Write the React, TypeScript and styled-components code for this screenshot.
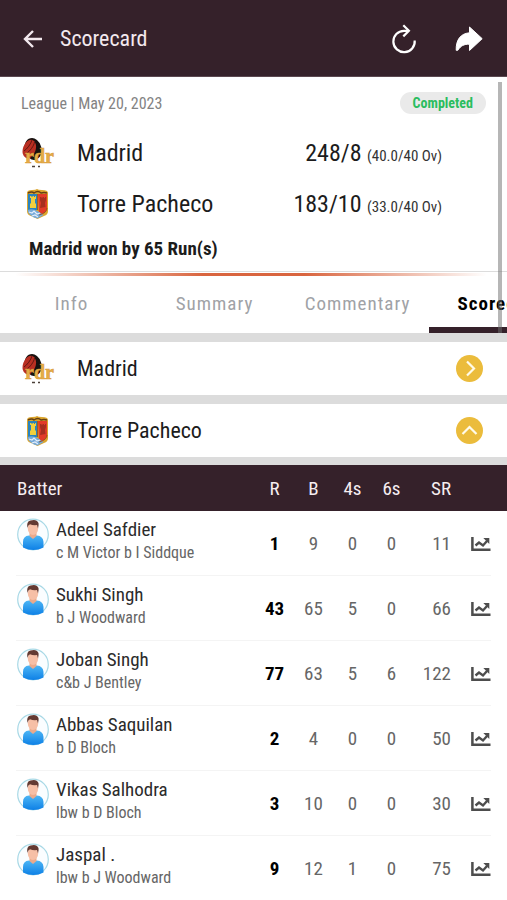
import React from 'react';
import styled, { createGlobalStyle } from 'styled-components';

const plum = '#35212a';

const GlobalStyle = createGlobalStyle`
  * { box-sizing: border-box; }
  body {
    margin: 0;
    background: #fff;
    color: #1c1c1c;
    font-family: "Roboto Condensed", "Liberation Sans Narrow", Roboto, sans-serif;
    overflow: hidden;
  }
  button { font: inherit; color: inherit; border: 0; padding: 0; background: none; cursor: pointer; }
  svg { display: block; }
  h1, h2, p { margin: 0; font-weight: 400; }
`;

const AppBar = styled.header`
  display: flex;
  align-items: center;
  height: 77px;
  padding: 2px 24px 0 22px;
  background: ${plum};
  border-bottom: 1px solid #5b4850;
  color: #fff;
`;

const Title = styled.h1`
  flex: 1;
  padding-left: 16px;
  font-size: 22px;
  line-height: 28px;
  color: #f3e9ee;
`;

const Actions = styled.div`
  display: flex;
  align-items: center;
  gap: 38px;
`;

const MatchArea = styled.div`
  position: relative;
`;

const ScrollThumb = styled.div`
  position: absolute;
  top: 5px;
  right: 5px;
  bottom: 0;
  width: 4px;
  background: rgba(110, 110, 110, 0.5);
`;

const MatchCard = styled.section`
  padding: 14px 21px 2px;
`;

const MetaRow = styled.div`
  display: flex;
  align-items: center;
  justify-content: space-between;
  height: 24px;
  margin-bottom: 12px;
  color: #838383;
  font-size: 16px;
`;

const Status = styled.span`
  padding: 0 13px;
  border-radius: 11px;
  background: #eaeaea;
  color: #2bbd60;
  font-size: 14px;
  font-weight: 700;
  line-height: 22px;
`;

const ScoreRow = styled.div`
  display: flex;
  align-items: center;
  height: 51px;
  padding-right: 44px;
`;

const Crest = styled.span`
  flex: none;
  width: 56px;
`;

const TeamName = styled.h2<{ $size: number }>`
  flex: 1;
  font-size: ${p => p.$size}px;
  line-height: 28px;
`;

const Score = styled.p`
  font-size: 24px;
  line-height: 28px;
`;

const Overs = styled.span`
  font-size: 15px;
  line-height: 1;
  color: #333;
`;

const Result = styled.p`
  padding: 0 8px;
  font-size: 19px;
  font-weight: 700;
  line-height: 40px;
`;

const Glow = styled.div`
  height: 5px;
  border-top: 1px solid #dcdcdc;
  padding-top: 1px;
  &::after {
    content: "";
    display: block;
    height: 3px;
    background: linear-gradient(90deg, transparent 3%, #d9653f 40%, #d9653f 60%, transparent 96%);
  }
`;

const TabBar = styled.nav`
  display: flex;
  overflow: hidden;
  height: 57px;
`;

const Tab = styled.button<{ $active?: boolean }>`
  && {
    flex: none;
    width: 143px;
    padding-top: 3px;
    border-bottom: 6px solid ${p => (p.$active ? plum : 'transparent')};
    color: ${p => (p.$active ? '#000' : '#a0a2a6')};
    font-size: 19px;
    font-weight: ${p => (p.$active ? 700 : 400)};
    letter-spacing: 1px;
  }
`;

const Innings = styled.button`
  && {
    display: flex;
    align-items: center;
    width: 100%;
    height: 62px;
    padding: 0 24px 0 21px;
    border-top: 9px solid #dcdcdc;
    text-align: left;
  }
`;

const TableWrap = styled.div`
  border-top: 8px solid #dcdcdc;
`;

const Table = styled.table`
  width: 100%;
  border-collapse: collapse;
  table-layout: fixed;
`;

const HeadRow = styled.tr`
  height: 46px;
  background: ${plum};
  color: #f6eef1;
  font-size: 19px;
`;

const HeadCell = styled.th<{ $kind?: 'name' | 'rate' | 'chart' }>`
  width: ${p => (p.$kind === 'name' ? 'auto' : p.$kind === 'chart' ? '56px' : p.$kind === 'rate' ? '40px' : '39px')};
  padding: 0 0 0 ${p => (p.$kind === 'name' ? '17px' : '0')};
  text-align: ${p => (p.$kind === 'name' ? 'left' : p.$kind === 'rate' ? 'right' : 'center')};
  font-weight: 400;
`;

const BatterRow = styled.tr`
  height: 65px;
  background: linear-gradient(#f4f4f4, #f4f4f4) 16px 100% / calc(100% - 32px) 1px no-repeat;
`;

const Cell = styled.td<{ $strong?: boolean; $right?: boolean }>`
  padding: 0;
  text-align: ${p => (p.$right ? 'right' : 'center')};
  color: ${p => (p.$strong ? '#000' : '#666')};
  font-size: 19px;
  font-weight: ${p => (p.$strong ? 700 : 400)};
`;

const PlayerCell = styled.th`
  padding: 7px 0 0 17px;
  text-align: left;
  vertical-align: top;
  font-weight: 400;
`;

const Player = styled.div`
  display: flex;
  gap: 7px;
`;

const PlayerName = styled.p`
  font-size: 19px;
  line-height: 24px;
  color: #2b2b2b;
`;

const Dismissal = styled.p`
  font-size: 16px;
  line-height: 22px;
  color: #666;
`;

const ChartButton = styled.button`
  && { display: block; margin-left: 20px; }
`;

const BackIcon = () => (
  <svg width="22" height="20" viewBox="0 0 22 20" fill="none" stroke="#f3e9ee" strokeWidth="2.4">
    <path d="M20 10H3M11 2L3 10l8 8" />
  </svg>
);

const RefreshIcon = () => (
  <svg width="26" height="30" viewBox="0 0 26 30" fill="none" stroke="#fff" strokeWidth="2.2">
    <path d="M23.700 16.500A10.700 10.700 0 1 1 13 6.800h4.500" />
    <path d="M12.300 1.200L17.900 6.800l-5.600 5.600" />
  </svg>
);

const ShareIcon = () => (
  <svg width="28" height="26" viewBox="0 0 28 26" fill="#fff" stroke="#fff" strokeWidth="1" strokeLinejoin="round">
    <path d="M14.500 1L27.200 12.700 14.500 24.500V18.200C9 18 5.500 20 2.800 24.300H1.200C.8 14 5.500 7.500 14.500 6.800z" />
  </svg>
);

const MadridCrest = () => (
  <svg width="34" height="32" viewBox="0 0 34 32">
    <ellipse cx="12" cy="12" rx="8.500" ry="11" fill="#17110f" transform="rotate(-14 12 12)" />
    <ellipse cx="8.300" cy="12" rx="6.300" ry="9.600" fill="#b92f22" transform="rotate(20 8.300 12)" />
    <path d="M3 14C6 12 10 7 11 3M5 17C9 14 13 9 13.500 5" fill="none" stroke="#5e1712" strokeWidth="1" />
    <text x="4" y="26" fontFamily="Liberation Serif, serif" fontSize="20" fontWeight="700" fill="#e5ad48" stroke="#d99b38" strokeWidth="0.6">rdr</text>
    <path d="M11 29.500h3M17 29.500h2" stroke="#4b4039" strokeWidth="1.600" />
  </svg>
);

const PachecoCrest = () => (
  <svg width="34" height="32" viewBox="0 0 34 32">
    <path d="M6 5q0-3 5-3 4 0 5-1 1 1 5 1 6 0 6 3v18q0 4-4 5l-6.500 3-6.500-3q-4-1-4-5z" fill="#dba52c" />
    <path d="M7 6h9v16H7z" fill="#2a83bd" />
    <path d="M17 6h9v14q0 5-8 7z" fill="#e23b28" />
    <path d="M6.500 22q5-2 10 1l6 4-6 3.500q-9-2-10-8.500z" fill="#75a9d9" />
    <path d="M9 20v-4l1-1v-5H9V8h1.500v1h1V8h1.500v1h1V8H15v3h-1v4l1 1v4z" fill="#f2cf3d" />
    <path d="M19 20l1-5-1-3V9h1.500v1h1V9H23v1h1V9h1v3l-1 3 .5 4z" fill="#a62f1f" />
    <path d="M7 5q4-2 6 0 4-3 7 0 3-1 6 0" fill="none" stroke="#654016" strokeWidth="1.500" />
    <path d="M8 24l3 1 2-2 3 3 3-1M11 28l3-1 3 2" fill="none" stroke="#e4eefa" strokeWidth="1.200" />
    <path d="M16.500 6v16M18 27q8-2 8-7" fill="none" stroke="#8a4a20" strokeWidth=".8" />
  </svg>
);

const Chevron = ({ open }: { open?: boolean }) => (
  <svg width="27" height="27" viewBox="0 0 27 27" fill="none">
    <circle cx="13.500" cy="13.500" r="13.500" fill="#ebbc3c" />
    <path d={open ? 'M6.500 17l7-7 7 7' : 'M11 6.500l7 7-7 7'} stroke="#fffbe9" strokeWidth="2.200" />
  </svg>
);

const Avatar = () => (
  <svg width="32" height="33" viewBox="0 0 32 33">
    <defs>
      <linearGradient id="shirt" x1="0" y1="0" x2="0" y2="1">
        <stop offset="0" stopColor="#4db6f5" />
        <stop offset="1" stopColor="#0d80e6" />
      </linearGradient>
    </defs>
    <circle cx="16" cy="16.500" r="15.300" fill="#fafdff" stroke="#a9d9e6" strokeWidth="1.200" />
    <path d="M6 29.500V24q0-6 6-6.500h8q6 .5 6.500 6.500v5.500q-10 5-20.500 0z" fill="url(#shirt)" />
    <path d="M12.500 14h7v4l-3.500 3-3.500-3z" fill="#eba98b" />
    <ellipse cx="16" cy="10.500" rx="5.200" ry="6.500" fill="#f6bfa6" />
    <path d="M10.500 10Q9 3.500 13.500 2.500q6-2 8 2.500.5 2-.5 5.500l-1-3.500q-4 .5-7-.8-2 .8-2.500 3.800z" fill="#633a32" />
  </svg>
);

const TrendIcon = () => (
  <svg width="20" height="16" viewBox="0 0 20 16" fill="none" stroke="#4d4d4d">
    <path d="M1.400 1v12.800H19.500" strokeWidth="2.500" />
    <path d="M4.500 9.500L8 6.500l4 3L16 5" strokeWidth="2.400" />
    <path d="M12.300 2h6v6z" fill="#4d4d4d" stroke="none" />
  </svg>
);

const batters = [
  ['Adeel Safdier', 'c M Victor b I Siddque', 1, 9, 0, 0, 11],
  ['Sukhi Singh', 'b J Woodward', 43, 65, 5, 0, 66],
  ['Joban Singh', 'c&b J Bentley', 77, 63, 5, 6, 122],
  ['Abbas Saquilan', 'b D Bloch', 2, 4, 0, 0, 50],
  ['Vikas Salhodra', 'lbw b D Bloch', 3, 10, 0, 0, 30],
  ['Jaspal .', 'lbw b J Woodward', 9, 12, 1, 0, 75],
] as const;

export default function App() {
  return (
    <>
      <GlobalStyle />
      <AppBar>
        <button aria-label="Back"><BackIcon /></button>
        <Title>Scorecard</Title>
        <Actions>
          <button aria-label="Refresh"><RefreshIcon /></button>
          <button aria-label="Share"><ShareIcon /></button>
        </Actions>
      </AppBar>
      <main>
        <MatchArea>
          <MatchCard>
            <MetaRow><span>League | May 20, 2023</span><Status>Completed</Status></MetaRow>
            <ScoreRow>
              <Crest><MadridCrest /></Crest>
              <TeamName $size={24}>Madrid</TeamName>
              <Score>248/8 <Overs>(40.0/40 Ov)</Overs></Score>
            </ScoreRow>
            <ScoreRow>
              <Crest><PachecoCrest /></Crest>
              <TeamName $size={24}>Torre Pacheco</TeamName>
              <Score>183/10 <Overs>(33.0/40 Ov)</Overs></Score>
            </ScoreRow>
            <Result>Madrid won by 65 Run(s)</Result>
          </MatchCard>
          <Glow />
          <TabBar>
            <Tab>Info</Tab>
            <Tab>Summary</Tab>
            <Tab>Commentary</Tab>
            <Tab $active>Scorecard</Tab>
          </TabBar>
          <ScrollThumb />
        </MatchArea>
        <Innings aria-expanded={false}>
          <Crest><MadridCrest /></Crest>
          <TeamName as="span" $size={22}>Madrid</TeamName>
          <Chevron />
        </Innings>
        <Innings aria-expanded>
          <Crest><PachecoCrest /></Crest>
          <TeamName as="span" $size={22}>Torre Pacheco</TeamName>
          <Chevron open />
        </Innings>
        <TableWrap>
          <Table>
            <thead>
              <HeadRow>
                <HeadCell $kind="name">Batter</HeadCell>
                <HeadCell>R</HeadCell>
                <HeadCell>B</HeadCell>
                <HeadCell>4s</HeadCell>
                <HeadCell>6s</HeadCell>
                <HeadCell $kind="rate">SR</HeadCell>
                <HeadCell $kind="chart" aria-label="Chart" />
              </HeadRow>
            </thead>
            <tbody>
              {batters.map(([name, out, r, b, fours, sixes, sr]) => (
                <BatterRow key={name}>
                  <PlayerCell scope="row">
                    <Player>
                      <Avatar />
                      <div>
                        <PlayerName>{name}</PlayerName>
                        <Dismissal>{out}</Dismissal>
                      </div>
                    </Player>
                  </PlayerCell>
                  <Cell $strong>{r}</Cell>
                  <Cell>{b}</Cell>
                  <Cell>{fours}</Cell>
                  <Cell>{sixes}</Cell>
                  <Cell $right>{sr}</Cell>
                  <Cell><ChartButton aria-label={`${name} chart`}><TrendIcon /></ChartButton></Cell>
                </BatterRow>
              ))}
            </tbody>
          </Table>
        </TableWrap>
      </main>
    </>
  );
}
